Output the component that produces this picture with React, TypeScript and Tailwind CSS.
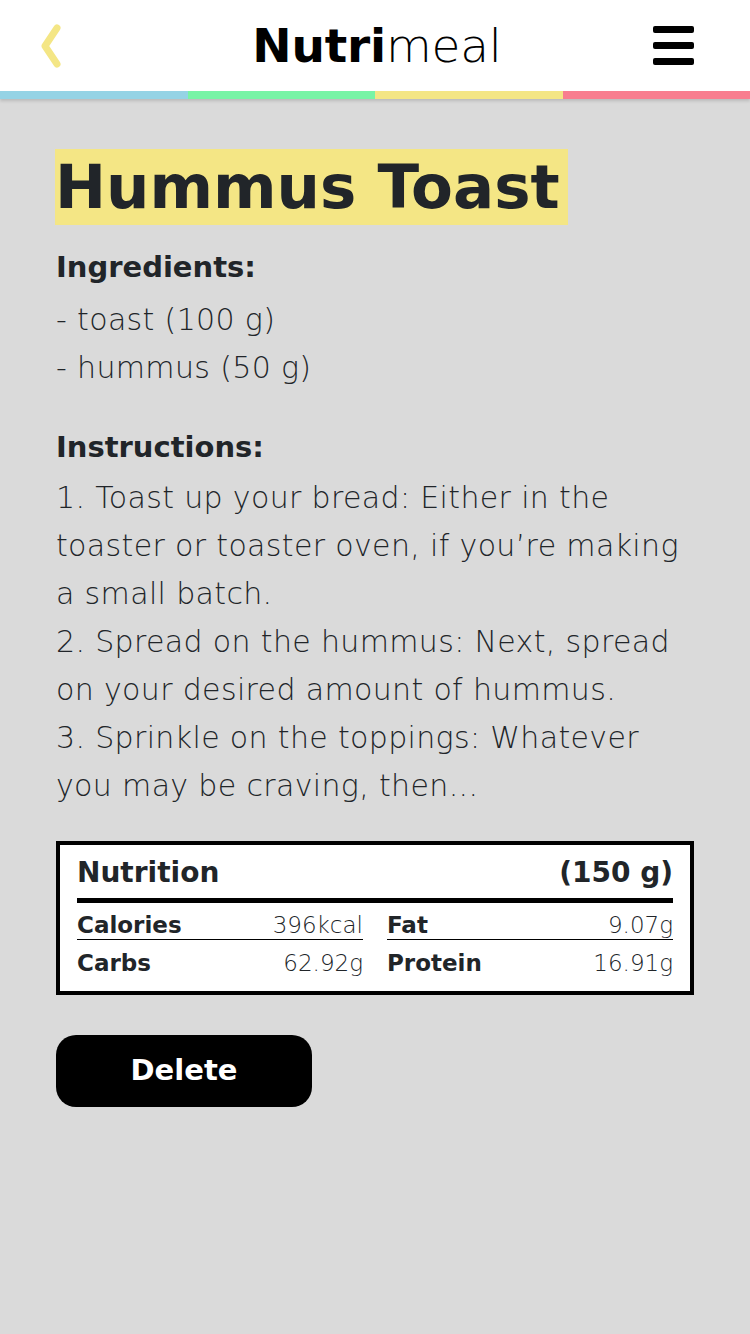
import React from 'react'

const font = { fontFamily: '"DejaVu Sans", sans-serif' }

function Header() {
    return (
        <div className="bg-white shadow-[0_2px_3px_rgba(0,0,0,0.15)]">
            <div className="h-[91px] grid grid-cols-[1fr_auto_1fr] items-center px-[40px]">
                <svg width="22" height="44" viewBox="0 0 22 44">
                    <path d="M17 4 L5 22 L17 40" fill="none" stroke="#f4e685" strokeWidth="7" strokeLinecap="round" strokeLinejoin="round" />
                </svg>
                <div className="text-[47px] text-black leading-none tracking-[-0.2px] translate-x-[2px]">
                    <span className="font-bold">Nutri</span>
                    <span className="font-extralight">meal</span>
                </div>
                <div className="flex flex-col gap-[9px] mr-[16px] justify-self-end">
                    <div className="w-[41px] h-[7px] rounded-[2px] bg-black" />
                    <div className="w-[41px] h-[7px] rounded-[2px] bg-black" />
                    <div className="w-[41px] h-[7px] rounded-[2px] bg-black" />
                </div>
            </div>
            <div className="flex h-[8px]">
                <div className="flex-1 bg-[#95d3e5]" />
                <div className="flex-1 bg-[#78f4a6]" />
                <div className="flex-1 bg-[#f4e685]" />
                <div className="flex-1 bg-[#f87e8f]" />
            </div>
        </div>
    )
}

function Nutrition() {
    return (
        <div className="mt-[31px] border-[4px] border-black bg-white px-[17px] pt-[9px] text-[#212529]">
            <div className="flex justify-between text-[28px] font-bold leading-[38px]">
                <span>Nutrition</span>
                <span>(150 g)</span>
            </div>
            <div className="h-[5px] bg-black mt-[6px]" />
            <div className="grid grid-cols-2 gap-x-[24px] text-[23px] leading-[27px]">
                <div className="flex justify-between items-end border-b border-black h-[37px]">
                    <span className="font-bold">Calories</span>
                    <span className="font-light">396kcal</span>
                </div>
                <div className="flex justify-between items-end border-b border-black h-[37px]">
                    <span className="font-bold">Fat</span>
                    <span className="font-light">9.07g</span>
                </div>
                <div className="flex justify-between items-start h-[51px] pt-[10px]">
                    <span className="font-bold">Carbs</span>
                    <span className="font-light">62.92g</span>
                </div>
                <div className="flex justify-between items-start h-[51px] pt-[10px]">
                    <span className="font-bold">Protein</span>
                    <span className="font-light">16.91g</span>
                </div>
            </div>
        </div>
    )
}

export default function App() {
    return (
        <div className="min-h-[1334px] bg-[#dadada]" style={font}>
            <Header />
            <div className="px-[56px] pt-[50px] text-[#212529]">
                <h1 className="inline-block bg-[#f4e685] text-[61px] font-bold leading-[76px] pr-[8px] -ml-[1px]">
                    Hummus Toast
                </h1>
                <div className="mt-[18px] leading-[48px]">
                    <div className="font-bold text-[29px] mb-[5px]">Ingredients:</div>
                    <div className="font-light text-[30px] tracking-[0.35px]">
                        <div>- toast (100 g)</div>
                        <div>- hummus (50 g)</div>
                    </div>
                    <div className="font-bold text-[29px] mt-[31px] mb-[3px]">Instructions:</div>
                    <div className="font-light text-[30px] tracking-[0.35px]">
                        <div>1. Toast up your bread: Either in the toaster or toaster oven, if you’re making a small batch.</div>
                        <div>2. Spread on the hummus: Next, spread on your desired amount of hummus.</div>
                        <div>3. Sprinkle on the toppings: Whatever you may be craving, then...</div>
                    </div>
                </div>
                <Nutrition />
                <button className="mt-[40px] w-[256px] h-[72px] rounded-[20px] bg-black text-white text-[29px] font-bold">
                    Delete
                </button>
            </div>
        </div>
    )
}
